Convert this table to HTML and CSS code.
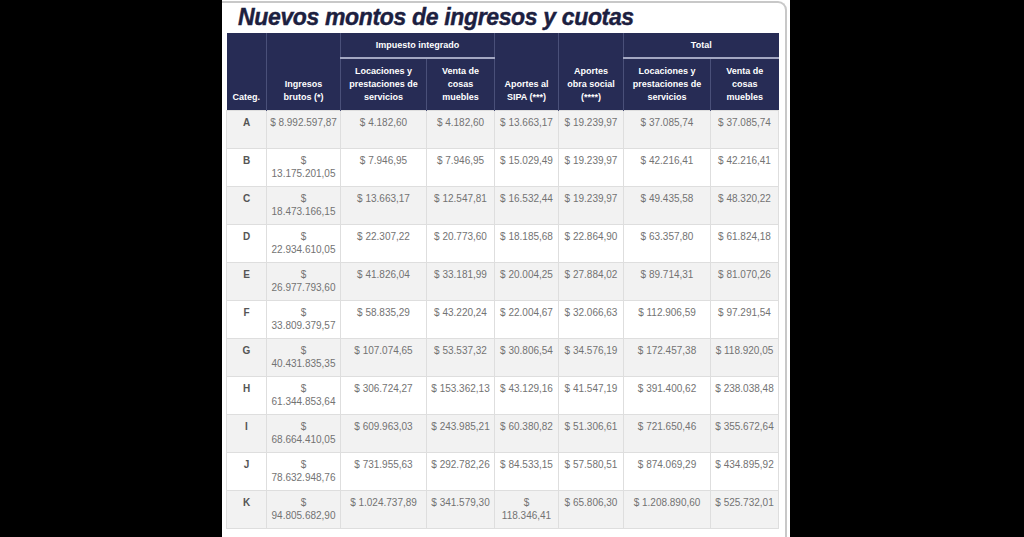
FILE: index.html
```html
<!DOCTYPE html>
<html lang="es">
<head>
<meta charset="utf-8">
<title>Nuevos montos de ingresos y cuotas</title>
<link rel="stylesheet" href="styles.css">
</head>
<body>
<div class="panel">
  <div class="frame">
    <h1 class="title">Nuevos montos de ingresos y cuotas</h1>
    <table class="tbl">
      <colgroup>
        <col class="c-cat"><col class="c-ing"><col class="c-loc"><col class="c-ven"><col class="c-sipa"><col class="c-os"><col class="c-tloc"><col class="c-tven">
      </colgroup>
      <thead>
        <tr class="h1">
          <th rowspan="2">Categ.</th>
          <th rowspan="2">Ingresos<br>brutos (*)</th>
          <th colspan="2" class="grp">Impuesto integrado</th>
          <th rowspan="2">Aportes al<br>SIPA (***)</th>
          <th rowspan="2">Aportes<br>obra social<br>(****)</th>
          <th colspan="2" class="grp">Total</th>
        </tr>
        <tr class="h2">
          <th>Locaciones y<br>prestaciones de<br>servicios</th>
          <th>Venta de<br>cosas<br>muebles</th>
          <th>Locaciones y<br>prestaciones de<br>servicios</th>
          <th>Venta de<br>cosas<br>muebles</th>
        </tr>
      </thead>
      <tbody>
        <tr><td class="cat">A</td><td>$ 8.992.597,87</td><td>$ 4.182,60</td><td>$ 4.182,60</td><td>$ 13.663,17</td><td>$ 19.239,97</td><td>$ 37.085,74</td><td>$ 37.085,74</td></tr>
        <tr><td class="cat">B</td><td>$<br>13.175.201,05</td><td>$ 7.946,95</td><td>$ 7.946,95</td><td>$ 15.029,49</td><td>$ 19.239,97</td><td>$ 42.216,41</td><td>$ 42.216,41</td></tr>
        <tr><td class="cat">C</td><td>$<br>18.473.166,15</td><td>$ 13.663,17</td><td>$ 12.547,81</td><td>$ 16.532,44</td><td>$ 19.239,97</td><td>$ 49.435,58</td><td>$ 48.320,22</td></tr>
        <tr><td class="cat">D</td><td>$<br>22.934.610,05</td><td>$ 22.307,22</td><td>$ 20.773,60</td><td>$ 18.185,68</td><td>$ 22.864,90</td><td>$ 63.357,80</td><td>$ 61.824,18</td></tr>
        <tr><td class="cat">E</td><td>$<br>26.977.793,60</td><td>$ 41.826,04</td><td>$ 33.181,99</td><td>$ 20.004,25</td><td>$ 27.884,02</td><td>$ 89.714,31</td><td>$ 81.070,26</td></tr>
        <tr><td class="cat">F</td><td>$<br>33.809.379,57</td><td>$ 58.835,29</td><td>$ 43.220,24</td><td>$ 22.004,67</td><td>$ 32.066,63</td><td>$ 112.906,59</td><td>$ 97.291,54</td></tr>
        <tr><td class="cat">G</td><td>$<br>40.431.835,35</td><td>$ 107.074,65</td><td>$ 53.537,32</td><td>$ 30.806,54</td><td>$ 34.576,19</td><td>$ 172.457,38</td><td>$ 118.920,05</td></tr>
        <tr><td class="cat">H</td><td>$<br>61.344.853,64</td><td>$ 306.724,27</td><td>$ 153.362,13</td><td>$ 43.129,16</td><td>$ 41.547,19</td><td>$ 391.400,62</td><td>$ 238.038,48</td></tr>
        <tr><td class="cat">I</td><td>$<br>68.664.410,05</td><td>$ 609.963,03</td><td>$ 243.985,21</td><td>$ 60.380,82</td><td>$ 51.306,61</td><td>$ 721.650,46</td><td>$ 355.672,64</td></tr>
        <tr><td class="cat">J</td><td>$<br>78.632.948,76</td><td>$ 731.955,63</td><td>$ 292.782,26</td><td>$ 84.533,15</td><td>$ 57.580,51</td><td>$ 874.069,29</td><td>$ 434.895,92</td></tr>
        <tr><td class="cat">K</td><td>$<br>94.805.682,90</td><td>$ 1.024.737,89</td><td>$ 341.579,30</td><td>$<br>118.346,41</td><td>$ 65.806,30</td><td>$ 1.208.890,60</td><td>$ 525.732,01</td></tr>
      </tbody>
    </table>
  </div>
</div>
</body>
</html>
```

FILE: styles.css
```css
html, body {
  margin: 0;
  padding: 0;
}
body {
  background: #000;
  height: 537px;
  overflow: hidden;
  font-family: "Liberation Sans", Arial, sans-serif;
}
.panel {
  margin-left: 222px;
  width: 568px;
  height: 537px;
  background: #fff;
  padding-top: 1px;
  box-sizing: border-box;
}
.frame {
  width: 565px;
  height: 540px;
  box-sizing: border-box;
  border-top: 2px solid #c8c8c8;
  border-right: 2px solid #c8c8c8;
  border-top-right-radius: 9px;
  padding-left: 4px;
}
.title {
  margin: 0 0 2px 0;
  padding-left: 12px;
  font-size: 23px;
  line-height: 28px;
  font-weight: bold;
  font-style: italic;
  color: #1c2040;
  letter-spacing: -0.35px;
  -webkit-text-stroke: 0.4px #1c2040;
}
.tbl {
  border-collapse: collapse;
  table-layout: fixed;
  width: 552px;
}
.c-cat { width: 40px; }
.c-ing { width: 74px; }
.c-loc { width: 86px; }
.c-ven { width: 68px; }
.c-sipa { width: 64px; }
.c-os { width: 65px; }
.c-tloc { width: 87px; }
.c-tven { width: 68px; }

.tbl th {
  background: #272c55;
  color: #fff;
  font-size: 9px;
  line-height: 13px;
  font-weight: bold;
  vertical-align: bottom;
  text-align: center;
  padding: 0 2px 6px;
  border-left: 1px solid #4a5079;
  white-space: nowrap;
}
.tbl th:first-child {
  border-left: none;
}
.tbl .h1 th {
  height: 25px;
  box-sizing: border-box;
}
.tbl .h1 th.grp {
  vertical-align: middle;
  padding: 0 2px;
  border-bottom: 2px solid #a3a7c2;
}
.tbl .h2 th {
  height: 52px;
  box-sizing: border-box;
}
.tbl .h2 th:first-child {
  border-left: 1px solid #4a5079;
}

.tbl td {
  height: 38px;
  box-sizing: border-box;
  padding: 5px 2px 0;
  vertical-align: top;
  text-align: center;
  font-size: 10px;
  line-height: 13px;
  color: #737373;
  border: 1px solid #dedede;
  white-space: nowrap;
}
.tbl tbody tr:nth-child(odd) td {
  background: #f2f2f2;
}
.tbl td.cat {
  font-weight: bold;
  color: #555;
}
```
